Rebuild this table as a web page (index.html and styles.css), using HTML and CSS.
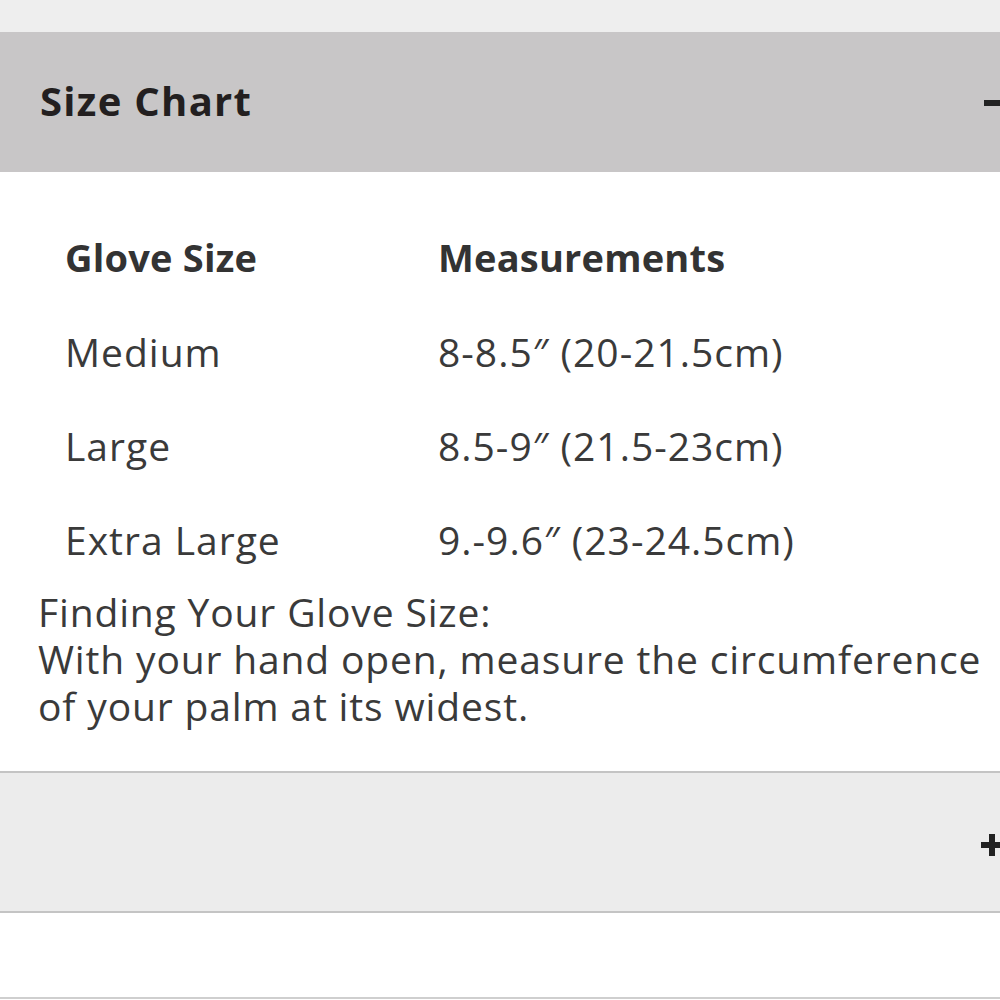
FILE: index.html
```html
<!DOCTYPE html>
<html>
<head>
<meta charset="utf-8">
<link rel="stylesheet" href="styles.css">
</head>
<body>
<div class="topband"></div>
<section class="acc acc-open">
  <div class="acc-head">
    <h2 class="acc-title">Size Chart</h2>
    <svg class="acc-icon minus" width="22" height="6" viewBox="0 0 22 6"><rect x="0" y="0" width="22" height="6" fill="#222"/></svg>
  </div>
  <div class="acc-body">
    <div class="chart">
      <div class="cell th">Glove Size</div>
      <div class="cell th">Measurements</div>
      <div class="cell">Medium</div>
      <div class="cell">8-8.5″ (20-21.5cm)</div>
      <div class="cell">Large</div>
      <div class="cell">8.5-9″ (21.5-23cm)</div>
      <div class="cell">Extra Large</div>
      <div class="cell">9.-9.6″ (23-24.5cm)</div>
    </div>
    <p class="note">Finding Your Glove Size:</p>
    <p class="note">With your hand open, measure the circumference of your palm at its widest.</p>
  </div>
</section>
<section class="acc acc-closed">
  <div class="acc-head closed">
    <span class="acc-title"></span>
    <svg class="acc-icon plus" width="22" height="22" viewBox="0 0 22 22"><rect x="0" y="8" width="22" height="6" fill="#222"/><rect x="8" y="0" width="6" height="22" fill="#222"/></svg>
  </div>
</section>
<div class="after"></div>
</body>
</html>
```
FILE: styles.css
```css
html, body {
  margin: 0;
  padding: 0;
  background: #fff;
}
body {
  width: 1000px;
  height: 1000px;
  overflow: hidden;
  font-family: "Open Sans", "Liberation Sans", sans-serif;
  color: #333;
}
.topband {
  height: 32px;
  background: #eeeeee;
}
.acc-head {
  height: 140px;
  background: #c8c6c7;
  display: flex;
  align-items: center;
  justify-content: space-between;
  padding-left: 40px;
  overflow: hidden;
}
.acc-title {
  margin: 0 0 4px 0;
  font-size: 40px;
  font-weight: 700;
  color: #231f20;
  letter-spacing: 1.3px;
}
.acc-icon {
  flex: none;
}
.minus {
  margin-right: -6px;
  margin-top: 2px;
}
.acc-body {
  padding: 0 0 42px 38px;
}
.chart {
  display: grid;
  grid-template-columns: 373px 1fr;
  grid-auto-rows: 94px;
  padding-left: 27px;
  padding-top: 38px;
  padding-bottom: 2px;
}
.cell {
  font-size: 39px;
  display: flex;
  align-items: center;
  color: #3a3a3a;
  letter-spacing: 1px;
}
.cell.th {
  font-size: 38px;
  font-weight: 700;
  color: #333;
  letter-spacing: 0.2px;
}
.note {
  margin: 0;
  width: 950px;
  font-size: 39px;
  line-height: 47px;
  color: #3a3a3a;
  letter-spacing: 0.85px;
}
.acc-closed {
  border-top: 2px solid #c4c4c4;
  border-bottom: 2px solid #c4c4c4;
}
.acc-head.closed {
  height: 138px;
  background: #ececec;
}
.plus {
  margin-right: -3px;
  margin-top: 6px;
}
.after {
  height: 84px;
  border-bottom: 2px solid #cfcfcf;
}
```
